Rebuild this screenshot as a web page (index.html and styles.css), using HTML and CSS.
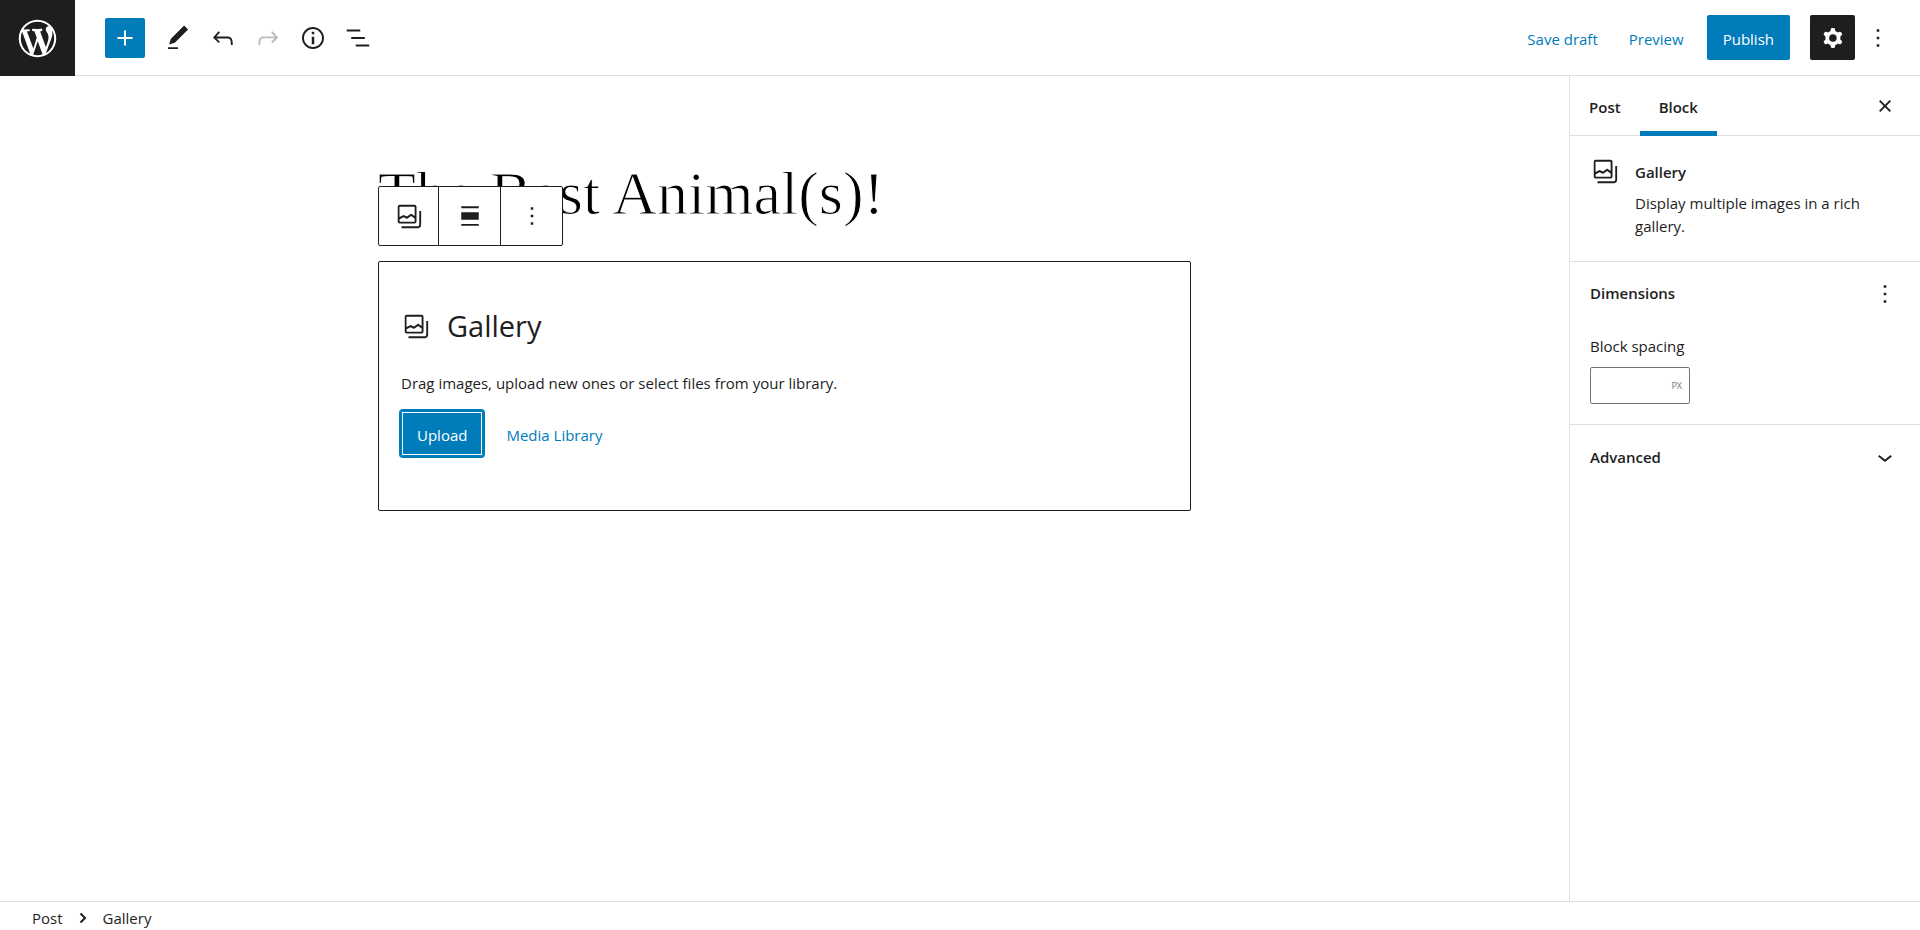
FILE: index.html
```html
<!DOCTYPE html>
<html lang="en">
<head>
<meta charset="utf-8">
<title>Edit Post</title>
<link rel="stylesheet" href="styles.css">
</head>
<body>
<svg class="sprite" aria-hidden="true">
  <symbol id="gallery" viewBox="0 0 24 24"><path d="M20.2 8v11c0 .7-.6 1.2-1.2 1.2H6v1.5h13c1.5 0 2.7-1.2 2.7-2.8V8h-1.5zM18 16.4V4.6c0-.9-.7-1.6-1.6-1.6H4.6C3.7 3 3 3.7 3 4.6v11.8c0 .9.7 1.6 1.6 1.6h11.8c.9 0 1.6-.7 1.6-1.6zM4.5 4.6c0-.1.1-.1.1-.1h11.8c.1 0 .1.1.1.1V12l-2.3-1.7c-.3-.2-.6-.2-.9 0l-2.9 2.1L8 11.3c-.2-.1-.5-.1-.7 0l-2.9 1.5V4.6zm0 11.8v-1.8l3.2-1.7 2.4 1.2c.2.1.5.1.8-.1l2.8-2 2.8 2v2.5c0 .1-.1.1-.1.1H4.6c0-.1-.1-.2-.1-.2z"/></symbol>
  <symbol id="more" viewBox="0 0 24 24"><path d="M13 19h-2v-2h2v2zm0-6h-2v-2h2v2zm0-6h-2V5h2v2z"/></symbol>
</svg>
<div class="editor">
  <header class="header">
    <a class="logo" href="#" aria-label="View posts"><svg viewBox="-2 -2 24 24"><path d="M20 10c0-5.51-4.49-10-10-10C4.48 0 0 4.49 0 10c0 5.52 4.48 10 10 10 5.51 0 10-4.48 10-10zM7.78 15.37L4.37 6.22c.55-.02 1.17-.08 1.17-.08.5-.06.44-1.13-.06-1.11 0 0-1.45.11-2.37.11-.18 0-.37 0-.58-.01C4.12 2.69 6.87 1.11 10 1.11c2.33 0 4.45.87 6.05 2.34-.68-.11-1.65.39-1.65 1.58 0 .74.45 1.36.9 2.1.35.61.55 1.36.55 2.46 0 1.49-1.4 5-1.4 5l-3.03-8.37c.54-.02.82-.17.82-.17.5-.05.44-1.25-.06-1.22 0 0-1.44.12-2.38.12-.87 0-2.33-.12-2.33-.12-.5-.03-.56 1.2-.06 1.22l.92.08 1.26 3.41zM17.41 10c.24-.64.74-1.87.43-4.25.7 1.29 1.05 2.71 1.05 4.25 0 3.29-1.73 6.24-4.4 7.78.97-2.59 1.94-5.2 2.92-7.78zM6.1 18.09C3.12 16.65 1.11 13.53 1.11 10c0-1.3.23-2.48.72-3.59C3.25 10.3 4.67 14.2 6.1 18.09zm4.03-6.63l2.58 6.98c-.86.29-1.76.45-2.71.45-.79 0-1.57-.11-2.29-.33.81-2.38 1.62-4.74 2.42-7.1z"/></svg></a>
    <div class="tools">
      <button class="inserter" aria-label="Add block"><svg class="icon" viewBox="0 0 24 24"><path d="M18 11.2h-5.2V6h-1.6v5.2H6v1.6h5.2V18h1.6v-5.2H18z"/></svg></button>
      <button class="icon-button" aria-label="Tools"><svg class="icon" viewBox="0 0 24 24"><path d="M20.1 5.1L16.9 2 6.2 12.7l-1.3 4.4 4.5-1.3L20.1 5.1zM4 20.8h8v-1.5H4v1.5z"/></svg></button>
      <button class="icon-button" aria-label="Undo"><svg class="icon" viewBox="0 0 24 24"><path d="M18.3 11.7c-.6-.6-1.4-.9-2.3-.9H6.7l2.9-3.3-1.1-1-4.5 5L8.5 16l1-1-2.7-2.7H16c.5 0 .9.2 1.3.5 1 1 1 3.4 1 4.5v.3h1.5v-.2c0-1.5 0-4.3-1.5-5.7z"/></svg></button>
      <button class="icon-button" aria-label="Redo" disabled><svg class="icon" viewBox="0 0 24 24"><path d="M15.6 6.5l-1.1 1 2.9 3.3H8c-.9 0-1.7.3-2.3.9-1.4 1.5-1.4 4.2-1.4 5.6v.2h1.5v-.3c0-1.1 0-3.5 1-4.5.3-.3.7-.5 1.3-.5h9.2L14.5 15l1.1 1.1 4.6-4.6-4.6-5z"/></svg></button>
      <button class="icon-button" aria-label="Details"><svg class="icon" viewBox="0 0 24 24"><path d="M12 3.2c-4.8 0-8.8 3.9-8.8 8.8 0 4.8 3.9 8.8 8.8 8.8 4.8 0 8.8-3.9 8.8-8.8 0-4.8-4-8.8-8.8-8.8zm0 16c-4 0-7.2-3.3-7.2-7.2C4.8 8 8 4.8 12 4.8s7.2 3.3 7.2 7.2c0 4-3.2 7.2-7.2 7.2zM11 17h2v-6h-2v6zm0-8h2V7h-2v2z"/></svg></button>
      <button class="icon-button" aria-label="List view"><svg class="icon" viewBox="0 0 24 24"><path d="M13.8 5.2H3v1.5h10.8V5.2zm-3.6 12v1.5H21v-1.5H10.2zm7.2-6H6.6v1.5h10.8v-1.5z"/></svg></button>
    </div>
    <div class="actions">
      <button class="text-button">Save draft</button>
      <button class="text-button">Preview</button>
      <button class="primary-button">Publish</button>
      <div class="view-actions">
        <button class="icon-button pressed" aria-label="Settings"><svg class="icon" viewBox="0 0 24 24"><path fill-rule="evenodd" d="M10.289 4.836A1 1 0 0111.275 4h1.306a1 1 0 01.987.836l.244 1.466c.787.26 1.503.679 2.108 1.218l1.393-.522a1 1 0 011.216.437l.653 1.13a1 1 0 01-.23 1.273l-1.148.944a6.025 6.025 0 010 2.435l1.149.946a1 1 0 01.23 1.272l-.653 1.13a1 1 0 01-1.216.437l-1.394-.522c-.605.54-1.32.958-2.108 1.218l-.244 1.466a1 1 0 01-.987.836h-1.306a1 1 0 01-.986-.836l-.244-1.466a5.995 5.995 0 01-2.108-1.218l-1.394.522a1 1 0 01-1.217-.436l-.653-1.131a1 1 0 01.23-1.272l1.149-.946a6.026 6.026 0 010-2.435l-1.148-.944a1 1 0 01-.23-1.272l.653-1.131a1 1 0 011.217-.437l1.393.522a5.994 5.994 0 012.108-1.218l.244-1.466zM14.929 12a3 3 0 11-6 0 3 3 0 016 0z"/></svg></button>
        <button class="icon-button" aria-label="Options"><svg class="icon"><use href="#more"/></svg></button>
      </div>
    </div>
  </header>
  <div class="body">
    <main class="canvas">
      <div class="content">
        <h1 class="post-title">The Best Animal(s)!</h1>
        <section class="block">
          <div class="block-toolbar" role="toolbar" aria-label="Block tools">
            <button aria-label="Gallery"><svg class="icon"><use href="#gallery"/></svg></button>
            <button aria-label="Align"><svg class="icon" viewBox="0 0 24 24"><path d="M5 15h14V9H5v6zm0 4.8h14v-1.5H5v1.5zM5 4.2v1.5h14V4.2H5z"/></svg></button>
            <button aria-label="Block options"><svg class="icon"><use href="#more"/></svg></button>
          </div>
          <h2 class="block-label"><svg class="icon"><use href="#gallery"/></svg>Gallery</h2>
          <p class="instructions">Drag images, upload new ones or select files from your library.</p>
          <div class="block-actions">
            <button class="primary-button focused">Upload</button>
            <button class="text-button">Media Library</button>
          </div>
        </section>
      </div>
    </main>
    <aside class="sidebar">
      <div class="tabs">
        <button class="tab">Post</button>
        <button class="tab active">Block</button>
        <button class="icon-button close" aria-label="Close settings"><svg class="icon" viewBox="0 0 24 24"><path d="M12 13.06l3.712 3.713 1.061-1.06L13.061 12l3.712-3.712-1.06-1.06L12 10.938 8.288 7.227l-1.061 1.06L10.939 12l-3.712 3.712 1.06 1.061L12 13.061z"/></svg></button>
      </div>
      <section class="card">
        <svg class="icon"><use href="#gallery"/></svg>
        <div>
          <h2 class="card-title">Gallery</h2>
          <p class="card-text">Display multiple images in a rich gallery.</p>
        </div>
      </section>
      <section class="panel">
        <div class="panel-head">
          <h2 class="panel-title">Dimensions</h2>
          <button class="icon-button" aria-label="View options"><svg class="icon"><use href="#more"/></svg></button>
        </div>
        <label class="field-label" for="spacing">Block spacing</label>
        <div class="unit-field"><input id="spacing" type="text"><span class="unit">PX</span></div>
      </section>
      <section class="panel-last">
        <button class="panel-toggle">Advanced<svg class="icon" viewBox="0 0 24 24"><path d="M17.5 11.6L12 16l-5.5-4.4.9-1.2L12 14l4.5-3.6 1 1.2z"/></svg></button>
      </section>
    </aside>
  </div>
  <footer class="footer">
    <button class="crumb">Post</button>
    <svg class="crumb-arrow" viewBox="0 0 10 12"><path d="M2.500 1.500L7 6l-4.500 4.500"/></svg>
    <span class="crumb">Gallery</span>
  </footer>
</div>
</body>
</html>
```
FILE: styles.css
```css
* { box-sizing: border-box; }
body {
  margin: 0;
  background: #fff;
  color: #1e1e1e;
  font: 15px/23px "Open Sans", "Noto Sans", sans-serif;
}
h1, h2, p { margin: 0; }
button {
  padding: 0;
  border: 0;
  background: none;
  color: inherit;
  font: inherit;
  cursor: pointer;
}
svg { fill: currentColor; }
.sprite { display: none; }
.icon { display: block; width: 30px; height: 30px; flex: none; }

.editor { display: flex; flex-direction: column; min-height: 100vh; }

.header { display: flex; align-items: center; height: 76px; border-bottom: 1px solid #e0e0e0; }
.logo {
  display: flex;
  align-items: center;
  justify-content: center;
  width: 75px;
  height: 76px;
  margin-bottom: -1px;
  background: #1e1e1e;
  color: #fff;
}
.logo svg { width: 45px; height: 45px; }
.tools { display: flex; align-items: center; padding-left: 30px; }
.inserter {
  display: grid;
  place-items: center;
  width: 40px;
  height: 40px;
  margin-right: 10px;
  border-radius: 2px;
  background: #007cba;
  color: #fff;
}
.icon-button {
  display: grid;
  place-items: center;
  width: 45px;
  height: 45px;
  border-radius: 2px;
}
.icon-button:disabled { color: #bbb; }
.pressed { background: #1e1e1e; color: #fff; }
.actions { display: flex; align-items: center; gap: 15px; margin-left: auto; padding-right: 20px; }
.view-actions { display: flex; padding-left: 5px; }
.text-button { height: 45px; padding: 4px 8px 0; color: #007cba; }
.primary-button {
  height: 45px;
  padding: 4px 16px 0;
  border-radius: 2px;
  background: #007cba;
  color: #fff;
}
.focused { box-shadow: inset 0 0 0 1px #007cba, inset 0 0 0 2px #fff, 0 0 0 2px #007cba; font-weight: 500; }

.body { display: flex; flex: 1; }
.canvas { flex: 1; padding: 76px 20px 0; }
.content { max-width: 813px; margin: 0 auto; }
.post-title {
  padding-bottom: 27px;
  color: #000;
  font: 400 62px/82px "Liberation Serif", serif;
  -webkit-text-stroke: 1px #fff;
}
.block {
  position: relative;
  min-height: 250px;
  padding: 43px 22px;
  border: 1px solid #1e1e1e;
  border-radius: 2px;
}
.block-toolbar {
  position: absolute;
  bottom: calc(100% + 16px);
  left: -1px;
  display: flex;
  border: 1px solid #1e1e1e;
  border-radius: 2px;
  background: #fff;
}
.block-toolbar button { display: grid; place-items: center; width: 62px; height: 58px; }
.block-toolbar button + button { border-left: 1px solid #1e1e1e; }
.block-toolbar button:first-child { width: 59px; }
.block-label { display: flex; align-items: center; gap: 16px; font-size: 29px; line-height: 42px; font-weight: 400; }
.instructions { padding: 25px 0 16px; }
.block-actions { display: flex; gap: 15px; }

.sidebar { width: 351px; border-left: 1px solid #e0e0e0; }
.tabs { display: flex; align-items: center; height: 60px; border-bottom: 1px solid #e0e0e0; }
.tab { align-self: stretch; margin-bottom: -1px; padding: 2px 19px 0; font-weight: 600; }
.active { box-shadow: inset 0 -5px #007cba; }
.close { margin: 0 13px 0 auto; }
.card { display: flex; gap: 15px; padding: 20px 20px 23px; border-bottom: 1px solid #e0e0e0; }
.card-title { padding: 5px 0 8px; font-size: 15px; line-height: 23px; font-weight: 600; }
.panel { padding: 0 20px 20px; border-bottom: 1px solid #e0e0e0; }
.panel-head { display: flex; align-items: center; justify-content: space-between; height: 63px; margin-right: -7px; }
.panel-title { font-size: 15px; line-height: 23px; font-weight: 600; }
.field-label { display: block; padding: 10px 0 9px; }
.unit-field {
  display: flex;
  align-items: center;
  width: 100px;
  height: 37px;
  padding-right: 7px;
  border: 1px solid #757575;
  border-radius: 2px;
}
.unit-field input { flex: 1; min-width: 0; height: 100%; padding: 0 8px; border: 0; background: none; font: inherit; outline: 0; }
.unit { color: #757575; font-size: 9px; line-height: 12px; }
.panel-toggle {
  display: flex;
  align-items: center;
  justify-content: space-between;
  width: 100%;
  padding: 17px 20px;
  font-weight: 600;
}

.footer { display: flex; align-items: center; height: 29px; padding: 4px 32px 0; border-top: 1px solid #e0e0e0; }
.crumb-arrow { width: 10px; height: 12px; margin: 0 15px; fill: none; stroke: #1e1e1e; stroke-width: 2; }
```
